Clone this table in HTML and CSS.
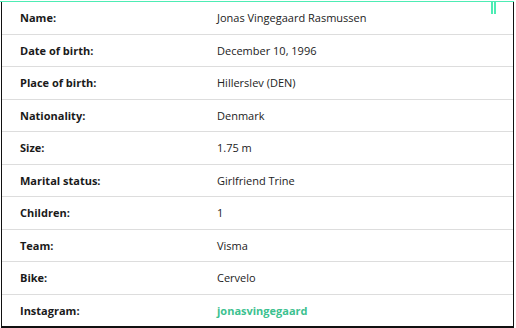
FILE: index.html
```html
<!DOCTYPE html>
<html>
<head>
<meta charset="utf-8">
<link rel="stylesheet" href="styles.css">
</head>
<body>
<div class="frame">
  <div class="marks"><span></span><span></span></div>
  <div class="table">
    <div class="row"><div class="label">Name:</div><div class="value">Jonas Vingegaard Rasmussen</div></div>
    <div class="row"><div class="label">Date of birth:</div><div class="value">December 10, 1996</div></div>
    <div class="row"><div class="label">Place of birth:</div><div class="value">Hillerslev (DEN)</div></div>
    <div class="row"><div class="label">Nationality:</div><div class="value">Denmark</div></div>
    <div class="row"><div class="label">Size:</div><div class="value">1.75 m</div></div>
    <div class="row"><div class="label">Marital status:</div><div class="value">Girlfriend Trine</div></div>
    <div class="row"><div class="label">Children:</div><div class="value">1</div></div>
    <div class="row"><div class="label">Team:</div><div class="value">Visma</div></div>
    <div class="row"><div class="label">Bike:</div><div class="value">Cervelo</div></div>
    <div class="row last"><div class="label">Instagram:</div><div class="value link">jonasvingegaard</div></div>
  </div>
</div>
</body>
</html>
```
FILE: styles.css
```css
html, body {
  margin: 0;
  padding: 0;
  background: #fff;
}
body {
  font-family: "Open Sans", "DejaVu Sans", sans-serif;
  font-size: 11px;
  color: #222;
}
.frame {
  position: relative;
  width: 514px;
  margin-top: 1px;
  border-top: 1px solid #4eecb4;
}
.marks {
  position: absolute;
  top: 0;
  left: 491px;
  display: flex;
  gap: 1px;
}
.marks span {
  display: block;
  width: 2px;
  height: 12px;
  background: #4eecb4;
}
.table {
  margin-left: 1px;
  border-left: 1px solid #111;
  border-right: 1px solid #111;
  border-bottom: 2px solid #111;
}
.row {
  display: flex;
  align-items: center;
  height: 31.5px;
  border-bottom: 1px solid #ddd;
}
.row.last {
  border-bottom: none;
  height: 31px;
}
.label {
  width: 197px;
  padding-left: 18px;
  font-weight: 700;
  color: #1a1a1a;
}
.value {
  flex: 1;
}
.link {
  color: #3cc18f;
  font-weight: 700;
}
```
